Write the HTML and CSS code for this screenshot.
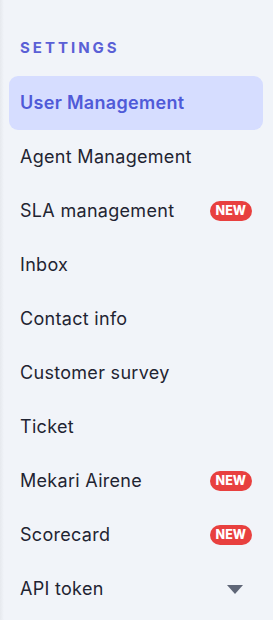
FILE: index.html
```html
<!DOCTYPE html>
<html>
<head>
<meta charset="utf-8">
<link rel="stylesheet" href="styles.css">
</head>
<body>
<nav class="sidebar">
  <div class="heading">SETTINGS</div>
  <ul class="menu">
    <li class="item active"><span class="label">User Management</span></li>
    <li class="item"><span class="label">Agent Management</span></li>
    <li class="item"><span class="label">SLA management</span><span class="badge">NEW</span></li>
    <li class="item"><span class="label">Inbox</span></li>
    <li class="item"><span class="label">Contact info</span></li>
    <li class="item"><span class="label">Customer survey</span></li>
    <li class="item"><span class="label">Ticket</span></li>
    <li class="item"><span class="label">Mekari Airene</span><span class="badge">NEW</span></li>
    <li class="item"><span class="label">Scorecard</span><span class="badge">NEW</span></li>
    <li class="item"><span class="label">API token</span><svg class="caret" width="16" height="9" viewBox="0 0 16 9"><path d="M0 0 H16 L8 9 Z" fill="#5f6677"/></svg></li>
  </ul>
</nav>
</body>
</html>
```
FILE: styles.css
```css
html, body {
  margin: 0;
  padding: 0;
}
body {
  width: 273px;
  height: 620px;
  background: #f1f4f9;
  font-family: Inter, "Noto Sans", sans-serif;
  overflow: hidden;
}
.sidebar {
  height: 620px;
  box-sizing: border-box;
  padding: 38px 10px 0 9px;
  background: linear-gradient(to right, #e6e9ee 0, #f1f4f9 4px);
}
.heading {
  font-size: 15px;
  font-weight: 700;
  letter-spacing: 3px;
  color: #5a60d6;
  padding-left: 11px;
  line-height: 18px;
  margin-top: 1px;
  margin-bottom: 19px;
}
.menu {
  list-style: none;
  margin: 0;
  padding: 0;
}
.item {
  height: 54px;
  display: flex;
  align-items: center;
  padding: 0 11px;
  border-radius: 9px;
  font-size: 18px;
  letter-spacing: 0.3px;
  color: #1f2432;
}
.item.active {
  background: #d6ddff;
  color: #4f5ad8;
  font-weight: 600;
}
.label {
  flex: 1;
  margin-top: -2px;
}
.badge {
  background: #e8403f;
  color: #fff;
  font-size: 12.5px;
  font-weight: 800;
  letter-spacing: 0;
  line-height: 20px;
  height: 20px;
  padding: 0 6px;
  border-radius: 10px;
}
.caret {
  margin-right: 9px;
}
```
